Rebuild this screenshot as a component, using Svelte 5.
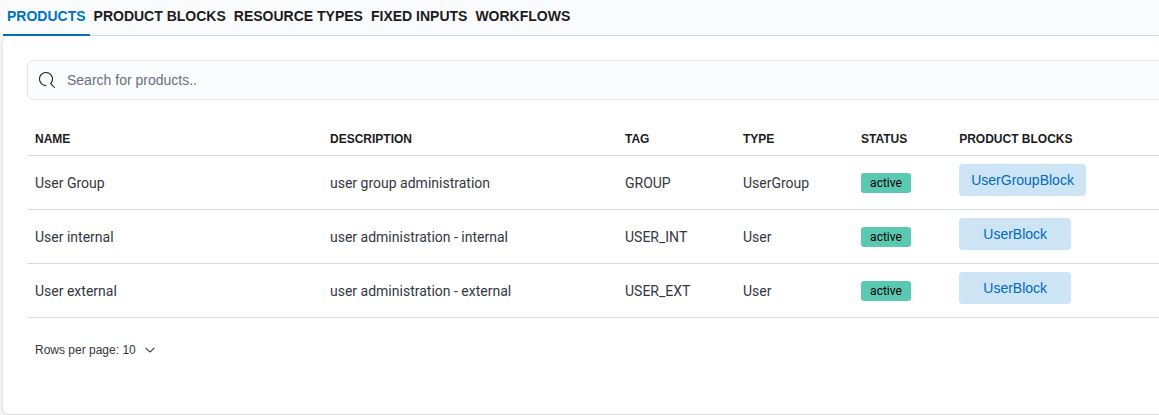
<script>
  const tabs = ['PRODUCTS', 'PRODUCT BLOCKS', 'RESOURCE TYPES', 'FIXED INPUTS', 'WORKFLOWS'];
  let selected = $state('PRODUCTS');
  const columns = ['NAME', 'DESCRIPTION', 'TAG', 'TYPE', 'STATUS', 'PRODUCT BLOCKS'];
  const products = [
    { name: 'User Group', description: 'user group administration', tag: 'GROUP', type: 'UserGroup', block: 'UserGroupBlock' },
    { name: 'User internal', description: 'user administration - internal', tag: 'USER_INT', type: 'User', block: 'UserBlock' },
    { name: 'User external', description: 'user administration - external', tag: 'USER_EXT', type: 'User', block: 'UserBlock' }
  ];
</script>

<div class="page">
  <nav class="tabs">
    {#each tabs as tab}
      <button class="tab" class:selected={tab === selected} onclick={() => (selected = tab)}>{tab}</button>
    {/each}
  </nav>

  <main class="panel">
    <label class="search">
      <svg width="16" height="16" viewBox="0 0 16 16"><path d="M11.271 11.978l3.872 3.873a.502.502 0 00.708 0 .502.502 0 000-.708l-3.565-3.564c2.38-2.747 2.267-6.923-.342-9.532-2.73-2.73-7.17-2.73-9.898 0-2.728 2.729-2.728 7.17 0 9.9a6.955 6.955 0 004.949 2.05.5.5 0 000-1 5.96 5.96 0 01-4.242-1.757 6.01 6.01 0 010-8.486 6.004 6.004 0 018.484 0 6.01 6.01 0 010 8.486.5.5 0 00.034.738z" /></svg>
      <input type="text" placeholder="Search for products.." />
    </label>

    <div class="table">
      <div class="row head">
        {#each columns as column}<span>{column}</span>{/each}
      </div>
      {#each products as product}
        <div class="row">
          <span>{product.name}</span>
          <span>{product.description}</span>
          <span>{product.tag}</span>
          <span>{product.type}</span>
          <span class="status"><span class="badge">active</span></span>
          <span class="blocks"><button class="block">{product.block}</button></span>
        </div>
      {/each}
    </div>

    <button class="pager">
      Rows per page: 10
      <svg width="12" height="12" viewBox="0 0 16 16"><path d="M13.069 5.157L8.384 9.768a.546.546 0 01-.768 0L2.93 5.158a.552.552 0 00-.771 0 .53.53 0 000 .759l4.684 4.61c.641.631 1.672.63 2.312 0l4.684-4.61a.53.53 0 000-.76.552.552 0 00-.771 0z" /></svg>
    </button>
  </main>
</div>

<style>
  :global(body) {
    margin: 0;
    overflow: hidden;
    background: #fafbfd;
  }
  .page {
    box-sizing: border-box;
    height: 415px;
    padding-left: 3px;
    overflow: hidden;
    color: #343741;
    font-family: Roboto, sans-serif;
    font-size: 14px;
  }
  button,
  input {
    margin: 0;
    padding: 0;
    border: 0;
    background: none;
    outline: none;
  }
  .tabs {
    position: relative;
    z-index: 1;
    display: flex;
    box-sizing: border-box;
    height: 36px;
    background: #fafbfd;
    box-shadow: inset 0 -1px #d3dae6;
  }
  .tab {
    padding: 0 4px 1px;
    border-bottom: 2px solid transparent;
    color: #1a1c21;
    font: bold 14px/33px "Liberation Sans", sans-serif;
    white-space: nowrap;
  }
  .tab.selected {
    color: #0071c2;
    border-color: #0071c2;
  }
  .panel {
    box-sizing: border-box;
    width: 1180px;
    height: 378px;
    padding: 24px 0 0 24px;
    border-radius: 6px;
    background: #fff;
    box-shadow: 0 1px 5px rgba(0, 0, 0, 0.1), 0 3.6px 13px rgba(0, 0, 0, 0.07), 0 0 1px rgba(0, 0, 0, 0.12);
  }
  .search {
    display: flex;
    align-items: center;
    gap: 12px;
    box-sizing: border-box;
    height: 40px;
    padding-left: 11px;
    border: 1px solid #e0e5ee;
    border-radius: 6px;
    background: #fbfcfd;
  }
  .search svg {
    fill: #1a1c21;
  }
  .search input {
    flex: 1;
    font: 14px "Liberation Sans", sans-serif;
  }
  .search input::placeholder {
    color: #69707d;
    opacity: 1;
  }
  .table {
    padding-top: 22px;
  }
  .row {
    display: grid;
    grid-template-columns: 295px 295px 118px 118px 98.2px 1fr;
    align-items: center;
    box-sizing: border-box;
    height: 54px;
    padding-left: 8px;
    border-bottom: 1px solid #d3dae6;
    line-height: 20px;
  }
  .head {
    height: 34px;
    color: #1a1c21;
    font: bold 12px/18px "Liberation Sans", sans-serif;
  }
  .status {
    display: flex;
  }
  .badge {
    width: 50px;
    border-radius: 3px;
    background: #5bc9b1;
    color: #000;
    font-size: 12px;
    line-height: 20px;
    text-align: center;
  }
  .blocks {
    display: flex;
    padding-bottom: 5px;
  }
  .block {
    min-width: 112px;
    height: 32px;
    padding: 0 12px;
    border-radius: 4px;
    background: #cce4f4;
    color: #006bb8;
    font: 14px/32px "Liberation Sans", sans-serif;
  }
  .pager {
    display: flex;
    align-items: center;
    gap: 8px;
    margin: 23px 0 0 8px;
    color: #343741;
    font: 12px/18px "Liberation Sans", sans-serif;
  }
  .pager svg {
    fill: #343741;
    stroke: #343741;
    stroke-width: 0.3;
  }
</style>
